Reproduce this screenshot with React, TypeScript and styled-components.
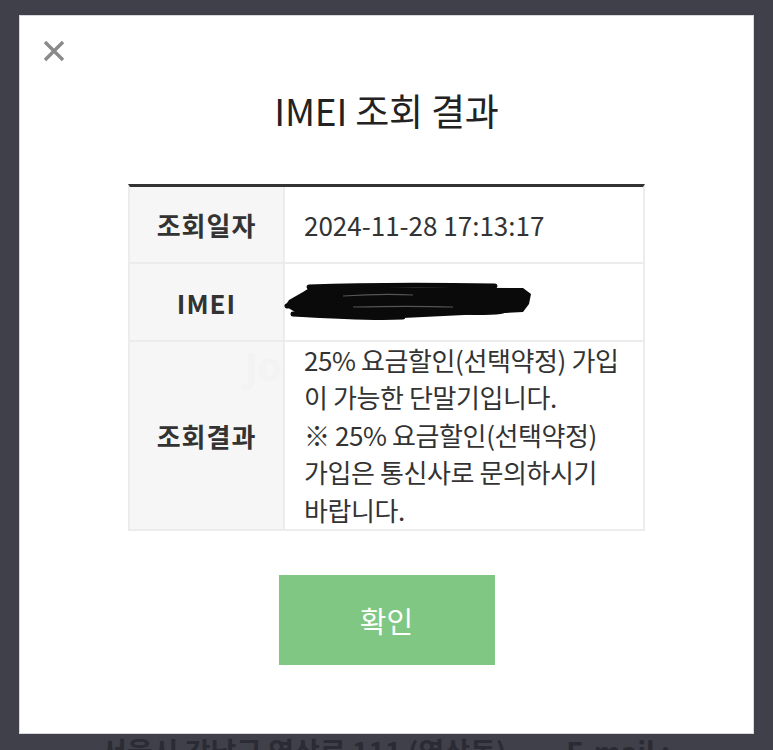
import styled, { createGlobalStyle } from 'styled-components';

const GlobalStyle = createGlobalStyle`
  html, body {
    margin: 0;
    padding: 0;
    background: #3f4049;
    height: 750px;
    overflow: hidden;
  }
  body {
    font-family: "Noto Sans CJK KR", "Noto Sans", sans-serif;
  }
`;

const Page = styled.div`
  width: 773px;
  height: 750px;
  padding: 16px 20px 0;
  box-sizing: border-box;
  display: flex;
  flex-direction: column;
  overflow: hidden;
`;

const Modal = styled.div`
  flex-shrink: 0;
  width: 733px;
  height: 717px;
  background: #ffffff;
  box-shadow: 0 0 0 1px #d8d8dc;
  box-sizing: border-box;
  padding: 24px 0 0;
  display: flex;
  flex-direction: column;
  align-items: center;
`;

const CloseRow = styled.div`
  align-self: stretch;
  height: 22px;
  padding-left: 23px;
`;

const CloseButton = styled.button`
  width: 22px;
  height: 22px;
  padding: 0;
  border: none;
  background: none;
  cursor: pointer;
  display: block;
`;

const Title = styled.h2`
  margin: 22px 0 0;
  font-size: 37px;
  line-height: 52px;
  font-weight: 400;
  color: #222;
  letter-spacing: -0.2px;
`;

const Table = styled.div`
  margin-top: 48px;
  width: 517px;
  border-top: 3px solid #333;
  display: grid;
  grid-template-columns: 155px 1fr;
  border-left: 2px solid #ececec;
  border-right: 2px solid #ececec;
  box-sizing: border-box;
`;

const Label = styled.div<{ $h: number }>`
  height: ${(p) => p.$h}px;
  background: #f6f6f6;
  border-bottom: 2px solid #ececec;
  border-right: 2px solid #ececec;
  display: flex;
  align-items: center;
  justify-content: center;
  font-size: 26px;
  font-weight: 700;
  color: #333;
  letter-spacing: 1px;
  box-sizing: border-box;
  position: relative;
  overflow: hidden;
`;

const LabelText = styled.span`
  position: relative;
`;

const Value = styled.div<{ $h: number }>`
  height: ${(p) => p.$h}px;
  border-bottom: 2px solid #ececec;
  display: flex;
  align-items: center;
  padding-left: 19px;
  font-size: 26px;
  color: #333;
  box-sizing: border-box;
  position: relative;
  white-space: nowrap;
`;

const ResultText = styled.div`
  line-height: 37.5px;
  letter-spacing: -0.4px;
  margin-top: -2px;
`;

const Scribble = styled.svg`
  position: absolute;
  left: -2px;
  top: 18px;
`;

const Watermark = styled.span`
  position: absolute;
  right: 2px;
  top: 0;
  font-family: "Noto Sans", sans-serif;
  font-size: 40px;
  line-height: 48px;
  font-weight: 700;
  color: #f3f3f3;
  letter-spacing: -1px;
`;

const ConfirmButton = styled.button`
  margin-top: 44px;
  width: 216px;
  height: 90px;
  border: none;
  background: #80c783;
  color: #fff;
  font-family: "Noto Sans CJK KR", sans-serif;
  font-size: 29px;
  cursor: pointer;
`;

const Footer = styled.div`
  display: flex;
  gap: 60px;
  padding: 0 0 0 81px;
  font-size: 28px;
  font-weight: 700;
  color: #2a2b33;
  line-height: 36px;
  white-space: nowrap;
`;

export default function App() {
  return (
    <>
      <GlobalStyle />
      <Page>
        <Modal>
          <CloseRow>
            <CloseButton aria-label="close">
              <svg width="22" height="22" viewBox="0 0 22 22">
                <path d="M2 2 L20 20 M20 2 L2 20" stroke="#8a8a8a" strokeWidth="3.4" strokeLinecap="butt" />
              </svg>
            </CloseButton>
          </CloseRow>
          <Title>IMEI 조회 결과</Title>
          <Table>
            <Label $h={77}>조회일자</Label>
            <Value $h={77}>2024-11-28 17:13:17</Value>
            <Label $h={78}>IMEI</Label>
            <Value $h={78}>
              <Scribble width="252" height="40" viewBox="0 0 252 40">
                <path d="M28 5 L240 6 L248 12 L246 22 L240 30 L120 36 L22 35 L12 30 L2 24 L6 18 L20 10 Z" fill="#0a0a0a" />
                <path
                  d="M26 5 C80 3 150 3 212 4 M4 24 C20 20 40 17 60 16 M10 32 C60 35 100 36 120 35 M180 30 C200 31 214 31 220 29"
                  stroke="#0a0a0a"
                  strokeWidth="5"
                  fill="none"
                  strokeLinecap="round"
                />
                <path d="M60 14 C90 12 110 12 130 13 M70 25 C110 24 140 24 170 25" stroke="#555" strokeWidth="1.2" fill="none" />
              </Scribble>
            </Value>
            <Label $h={189}>
              <Watermark>Jo</Watermark>
              <LabelText>조회결과</LabelText>
            </Label>
            <Value $h={189}>
              <ResultText>
                25% 요금할인(선택약정) 가입
                <br />
                이 가능한 단말기입니다.
                <br />
                ※ 25% 요금할인(선택약정)
                <br />
                가입은 통신사로 문의하시기
                <br />
                바랍니다.
              </ResultText>
            </Value>
          </Table>
          <ConfirmButton>확인</ConfirmButton>
        </Modal>
        <Footer>
          <span>서울시 강남구 역삼로 111 (역삼동)</span>
          <span>E-mail :</span>
        </Footer>
      </Page>
    </>
  );
}
